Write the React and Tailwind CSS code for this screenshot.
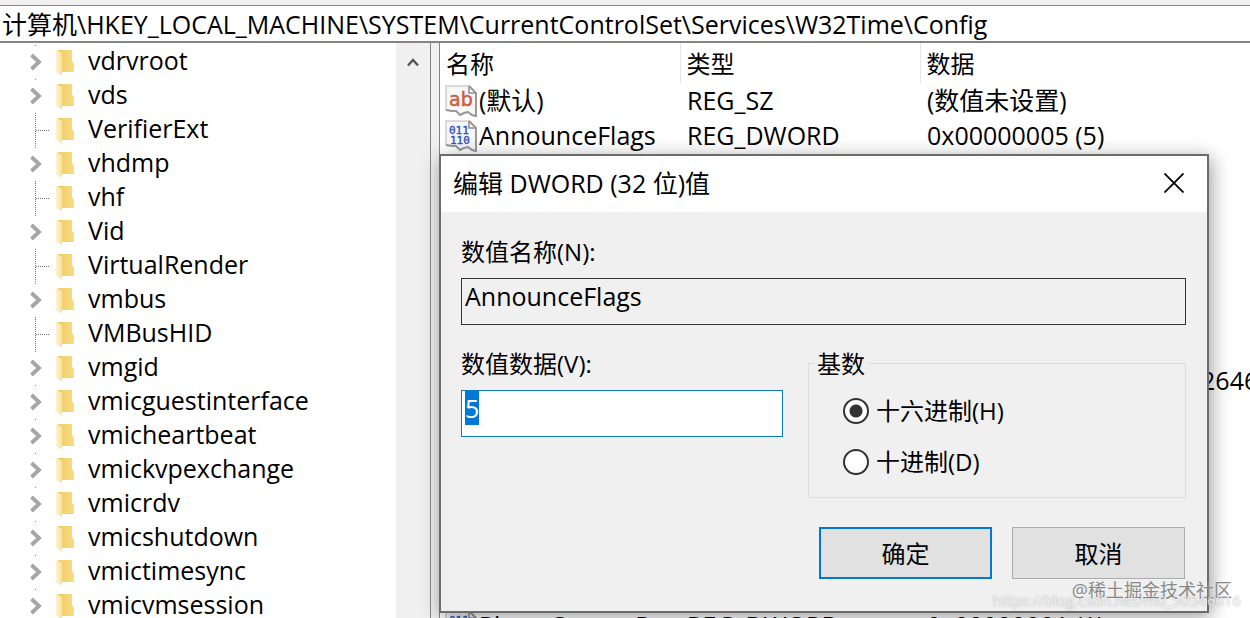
import React, { useEffect, useRef, useState } from 'react';

const services = [
  { name: 'vdrvroot', expandable: true },
  { name: 'vds', expandable: true },
  { name: 'VerifierExt', expandable: false },
  { name: 'vhdmp', expandable: true },
  { name: 'vhf', expandable: false },
  { name: 'Vid', expandable: true },
  { name: 'VirtualRender', expandable: false },
  { name: 'vmbus', expandable: true },
  { name: 'VMBusHID', expandable: false },
  { name: 'vmgid', expandable: true },
  { name: 'vmicguestinterface', expandable: true },
  { name: 'vmicheartbeat', expandable: true },
  { name: 'vmickvpexchange', expandable: true },
  { name: 'vmicrdv', expandable: true },
  { name: 'vmicshutdown', expandable: true },
  { name: 'vmictimesync', expandable: true },
  { name: 'vmicvmsession', expandable: true },
];

const blank = { name: '', type: '', data: '' };

const values = [
  { name: '(默认)', kind: 'string', type: 'REG_SZ', data: '(数值未设置)' },
  { name: 'AnnounceFlags', kind: 'number', type: 'REG_DWORD', data: '0x00000005 (5)' },
  ...Array(6).fill(blank),
  { name: '', type: '', data: '0x1d73f1c1e5c8a62 (132646' },
  ...Array(6).fill(blank),
  { name: 'PhaseCorrectRate', kind: 'number', type: 'REG_DWORD', data: '0x00000001 (1)' },
];

const FolderIcon = () => (
  <svg width="20" height="28" viewBox="0 0 20 28" className="shrink-0">
    <defs>
      <linearGradient id="folderBack" x1="0" x2="1">
        <stop offset="0" stopColor="#efca66" />
        <stop offset="1" stopColor="#fadc83" />
      </linearGradient>
      <linearGradient id="folderFront" x1="0" x2="1">
        <stop offset="0" stopColor="#fdf2d2" />
        <stop offset="1" stopColor="#fbe19a" />
      </linearGradient>
    </defs>
    <path d="M3 2H17V13L19 15.5V24H6Z" fill="url(#folderBack)" />
    <path d="M1 2L7 5V27.5L1 24Z" fill="url(#folderFront)" />
  </svg>
);

const ExpandMark = () => (
  <svg width="14" height="34" viewBox="0 0 14 34" fill="none">
    <path d="M5 0.5H6" stroke="#808080" />
    <path d="M1.5 10L9 17L1.5 24" stroke="#a6a6a6" strokeWidth="3.8" />
  </svg>
);

const LeafMark = () => (
  <svg width="20" height="34" viewBox="0 0 20 34" fill="none" stroke="#707070">
    <path d="M5.5 0V34M6 17.5H20" strokeDasharray="1 1" />
  </svg>
);

const ValueIcon = ({ kind }) => (
  <svg width="32" height="32" viewBox="0 0 32 32" className="shrink-0">
    <path
      d="M1 1H24L31 8V31L27 30L23 27L19 28L15 30L11 26L7 26L1 25Z"
      fill="#f7f7f7"
      stroke="#d0d0d0"
      strokeWidth="1.5"
    />
    <path d="M24 1V8H31" fill="#fff" stroke="#8c8c8c" strokeWidth="1.5" />
    <path
      d="M24 1L31 8V31L27 30L23 27L19 28L15 30L11 26L7 26L1 25"
      fill="none"
      stroke="#999"
      strokeWidth="2"
    />
    {kind === 'string' ? (
      <text x="4" y="21" fontSize="19" fill="#cf5b3f" stroke="#cf5b3f" strokeWidth="0.5" fontFamily="DejaVu Sans, sans-serif">
        ab
      </text>
    ) : (
      <g fontSize="11" fill="#2f52c8" stroke="#2f52c8" strokeWidth="0.4" fontFamily="DejaVu Sans Mono, monospace">
        <text x="4" y="14">011</text>
        <text x="5" y="24">110</text>
      </g>
    )}
  </svg>
);

const TreeItem = ({ item }) => (
  <li className="flex h-[34px] items-center">
    <div className="flex w-[55px] shrink-0 items-center pl-[30px]">
      {item.expandable ? <ExpandMark /> : <LeafMark />}
    </div>
    <FolderIcon />
    <span className="pb-[3px] pl-[13px]">{item.name}</span>
  </li>
);

const Tree = () => (
  <ul className="min-w-0 flex-1 pt-[2px]">
    {services.map((item) => (
      <TreeItem key={item.name} item={item} />
    ))}
  </ul>
);

const ValueTable = () => (
  <table className="w-full table-fixed border-collapse text-left whitespace-nowrap">
    <thead className="text-[24px]">
      <tr className="h-10">
        <th className="w-60 border-r border-[#e5e5e5] pl-[6px] font-normal">名称</th>
        <th className="w-60 border-r border-[#e5e5e5] pl-[6px] font-normal">类型</th>
        <th className="pl-[6px] font-normal">数据</th>
      </tr>
    </thead>
    <tbody>
      {values.map((value, i) => (
        <tr key={i} className="h-[35px]">
          <td className="p-0 pl-[5px]">
            <div className="flex items-center gap-[2px]">
              {value.kind && <ValueIcon kind={value.kind} />}
              {value.name}
            </div>
          </td>
          <td className="p-0 pl-[7px]">{value.type}</td>
          <td className="p-0 pl-[7px]">{value.data}</td>
        </tr>
      ))}
    </tbody>
  </table>
);

const BaseOption = ({ label, value, base, setBase }) => (
  <label className="flex items-center gap-[7px]">
    <input
      type="radio"
      name="base"
      value={value}
      checked={base === value}
      onChange={() => setBase(value)}
      className="size-[26px] appearance-none rounded-full border-2 border-[#333] bg-white checked:bg-[radial-gradient(circle,#333_6px,#fff_7px)]"
    />
    {label}
  </label>
);

const EditDialog = () => {
  const [data, setData] = useState('5');
  const [base, setBase] = useState('hex');
  const dataRef = useRef(null);

  // The value is selected as soon as the dialog opens
  useEffect(() => {
    dataRef.current.focus();
    dataRef.current.select();
  }, []);

  return (
    <div
      role="dialog"
      aria-labelledby="dialog-title"
      className="absolute top-[154px] left-[439px] w-[770px] border-2 border-[#6b6b6b] bg-[#f0f0f0] shadow-[2px_4px_18px_rgba(0,0,0,0.4)]"
    >
      <div className="flex h-14 items-center justify-between bg-white pr-[23px] pb-[2px] pl-3">
        <h2 id="dialog-title">编辑 DWORD (32 位)值</h2>
        <button type="button" aria-label="关闭">
          <svg width="20" height="20" viewBox="0 0 20 20" stroke="#000" strokeWidth="1.8">
            <path d="M0.5 0.5L19.5 19.5M19.5 0.5L0.5 19.5" />
          </svg>
        </button>
      </div>

      <form className="pt-6 pr-[21px] pb-8 pl-5 text-[24px]" onSubmit={(e) => e.preventDefault()}>
        <label htmlFor="value-name" className="block">数值名称(N):</label>
        <input
          id="value-name"
          readOnly
          value="AnnounceFlags"
          className="mt-[11px] block h-[47px] w-full border border-[#333] bg-[#f0f0f0] px-[3px] pt-px pb-[13px] text-[25px]"
        />

        <div className="mt-[23px] flex gap-[25px]">
          <div className="w-[322px]">
            <label htmlFor="value-data" className="block">数值数据(V):</label>
            <input
              id="value-data"
              ref={dataRef}
              value={data}
              onChange={(e) => setData(e.target.value)}
              className="mt-[11px] block h-[47px] w-full border border-[#0f7ac4] bg-white px-[3px] pt-px pb-[13px] text-[25px] outline-none selection:bg-[#0078d7] selection:text-white"
            />
          </div>
          <fieldset className="h-[150px] flex-1 border border-[#dcdcdc] pl-[34px]">
            <legend className="-ml-[29px] px-[3px]">基数</legend>
            <div className="flex flex-col gap-5 pt-4">
              <BaseOption label="十六进制(H)" value="hex" base={base} setBase={setBase} />
              <BaseOption label="十进制(D)" value="dec" base={base} setBase={setBase} />
            </div>
          </fieldset>
        </div>

        <div className="mt-[29px] flex justify-end gap-5 pr-px">
          <button type="submit" className="h-[52px] w-[173px] border-2 border-[#0078d7] bg-[#e1e1e1]">
            确定
          </button>
          <button type="button" className="h-[52px] w-[173px] border border-[#adadad] bg-[#e1e1e1]">
            取消
          </button>
        </div>
      </form>
    </div>
  );
};

const App = () => {
  return (
    <div className="relative flex h-screen flex-col overflow-hidden bg-white font-['Open_Sans','Noto_Sans_CJK_SC',sans-serif] text-[25px] leading-[31px] text-black">
      <div className="border-b border-[#858585] bg-[#f0f0f0] pt-[5px]" />
      <input
        aria-label="地址"
        defaultValue="计算机\HKEY_LOCAL_MACHINE\SYSTEM\CurrentControlSet\Services\W32Time\Config"
        className="h-[37px] shrink-0 border-b-2 border-[#858585] bg-white px-[2px] pb-[2px] outline-none"
      />

      <div className="flex min-h-0 flex-1">
        <div className="flex w-[431px] shrink-0 border-r border-[#858585]">
          <Tree />
          <div className="w-[34px] bg-[#f0f0f0] pt-[14px]">
            <button type="button" aria-label="向上滚动" className="block w-full">
              <svg width="12" height="10" viewBox="0 0 12 10" fill="none" className="mx-auto">
                <path d="M1 8.5L6 3L11 8.5" stroke="#555" strokeWidth="2.4" />
              </svg>
            </button>
          </div>
        </div>
        <div className="w-2 shrink-0 bg-[#f0f0f0]" />
        <div className="min-w-0 flex-1 overflow-hidden border-l border-[#858585]">
          <ValueTable />
        </div>
      </div>

      <EditDialog />

      <div className="pointer-events-none absolute right-[18px] bottom-[14px] text-[18px] leading-7 text-[#8a8a8a]">
        @稀土掘金技术社区
      </div>
      <div className="pointer-events-none absolute right-[9px] bottom-2 text-[15px] leading-5 text-white/70 [text-shadow:0_0_2px_rgba(0,0,0,0.3)]">
        https://blog.csdn.net/m0_50546016
      </div>
    </div>
  );
};

export default App;
